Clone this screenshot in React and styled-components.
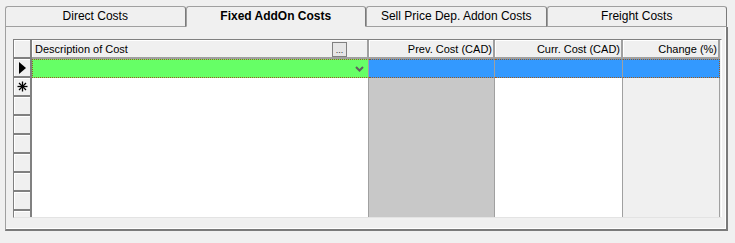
import React from 'react';
import styled, { createGlobalStyle } from 'styled-components';

const GlobalStyle = createGlobalStyle`
  body {
    margin: 0;
    background: #f0f0f0;
    font-family: "Liberation Sans", Arial, sans-serif;
    color: #000;
  }
`;

const tabs = ['Direct Costs', 'Fixed AddOn Costs', 'Sell Price Dep. Addon Costs', 'Freight Costs'];
const activeTab = 1;

const columns = [
  { key: 'desc', label: 'Description of Cost', align: 'left', bg: '#ffffff', current: '#66ff66' },
  { key: 'prev', label: 'Prev. Cost (CAD)', align: 'right', bg: '#c8c8c8', current: '#3399ff' },
  { key: 'curr', label: 'Curr. Cost (CAD)', align: 'right', bg: '#ffffff', current: '#3399ff' },
  { key: 'change', label: 'Change (%)', align: 'right', bg: '#f0f0f0', current: '#3399ff' },
];

const rowCount = 9;

const Arrow = () => (
  <svg width="7" height="12" viewBox="0 0 7 12">
    <polygon points="0,0 7,6 0,12" fill="#000" />
  </svg>
);

const Star = () => (
  <svg width="11" height="11" viewBox="0 0 11 11" stroke="#000" strokeWidth="1.3">
    <line x1="5.5" y1="0.5" x2="5.5" y2="10.5" />
    <line x1="0.5" y1="5.5" x2="10.5" y2="5.5" />
    <line x1="2" y1="2" x2="9" y2="9" />
    <line x1="9" y1="2" x2="2" y2="9" />
  </svg>
);

const Chevron = () => (
  <svg width="9" height="6" viewBox="0 0 9 6">
    <polyline points="1,1 4.5,4.5 8,1" fill="none" stroke="#606060" strokeWidth="2" />
  </svg>
);

const App = () => {
  return (
    <>
      <GlobalStyle />
      <Frame>
        <TabBar>
          {tabs.map((t, i) => (
            <Tab key={t} $active={i === activeTab}>
              {t}
            </Tab>
          ))}
        </TabBar>
        <Panel>
          <Table>
            <RowHead />
            {columns.map((c, i) => (
              <HeadCell key={c.key} $align={c.align}>
                <span>{c.label}</span>
                {i === 0 && <DotsButton>...</DotsButton>}
              </HeadCell>
            ))}
            {Array.from({ length: rowCount }).map((_, r) => (
              <React.Fragment key={r}>
                <RowHead>
                  {r === 0 && <Arrow />}
                  {r === 1 && <Star />}
                </RowHead>
                {columns.map((c, i) => (
                  <Cell
                    key={c.key}
                    $bg={r === 0 ? c.current : c.bg}
                    $current={r === 0}
                    $first={i === 0}
                    $last={i === columns.length - 1}
                  >
                    {r === 0 && i === 0 && <Chevron />}
                  </Cell>
                ))}
              </React.Fragment>
            ))}
          </Table>
        </Panel>
      </Frame>
    </>
  );
};

export default App;

const Frame = styled.div`
  padding: 6px 0 0 5px;
  width: 723px;
`;

const TabBar = styled.div`
  display: flex;
  width: 722px;
  height: 21px;
  align-items: flex-end;
`;

const Tab = styled.div`
  flex: 1;
  box-sizing: border-box;
  height: 21px;
  display: flex;
  align-items: center;
  justify-content: center;
  padding-bottom: 1px;
  font-size: 12px;
  font-weight: ${({ $active }) => ($active ? 'bold' : 'normal')};
  background: #f0f0f0;
  border-top: 1px solid #a0a0a0;
  border-left: 1px solid #a0a0a0;
  border-right: 1px solid #7a7a7a;
  border-bottom: ${({ $active }) => ($active ? '1px solid #f0f0f0' : '1px solid #a0a0a0')};
  border-top-left-radius: 3px;
  border-top-right-radius: 3px;
  white-space: nowrap;
`;

const Panel = styled.div`
  box-sizing: border-box;
  width: 723px;
  height: 204px;
  padding: 12px 0 10px 7px;
  border-left: 1px solid #a0a0a0;
  border-right: 2px solid #7a7a7a;
  border-bottom: 2px solid #7a7a7a;
  box-shadow: inset -1px -1px 0 #ffffff;
`;

const Table = styled.div`
  box-sizing: border-box;
  width: 709px;
  height: 179px;
  overflow: hidden;
  display: grid;
  grid-template-columns: 18px 337px 126px 128px 97px;
  grid-auto-rows: 19px;
  align-content: start;
  border-top: 1px solid #808080;
  border-left: 1px solid #808080;
  border-right: 1px solid #ffffff;
  border-bottom: 1px solid #e3e3e3;
  background: #f0f0f0;
`;

const RowHead = styled.div`
  box-sizing: border-box;
  display: flex;
  align-items: center;
  justify-content: center;
  background: #f0f0f0;
  border-right: 2px solid #808080;
  border-bottom: 2px solid #808080;
  box-shadow: inset 1px 1px 0 #ffffff;
`;

const HeadCell = styled.div`
  box-sizing: border-box;
  position: relative;
  display: flex;
  align-items: center;
  justify-content: ${({ $align }) => ($align === 'right' ? 'flex-end' : 'flex-start')};
  padding: 1px 1px 0 3px;
  font-size: 11px;
  background: #f0f0f0;
  border-right: 2px solid #a0a0a0;
  border-bottom: 2px solid #a0a0a0;
  box-shadow: inset 1px 1px 0 #ffffff;
  white-space: nowrap;
  overflow: hidden;
`;

const DotsButton = styled.div`
  position: absolute;
  right: 20px;
  top: 2px;
  box-sizing: border-box;
  width: 15px;
  height: 15px;
  border: 1px solid #808080;
  background: #e6e6e6;
  font-size: 9px;
  line-height: 15px;
  text-align: center;
  color: #333;
`;

const Cell = styled.div`
  box-sizing: border-box;
  display: flex;
  align-items: center;
  justify-content: flex-end;
  padding-right: 4px;
  background: ${({ $bg }) => $bg};
  border-right: 1px solid #a0a0a0;
  ${({ $current, $first, $last }) =>
    $current &&
    `
    border-top: 1px dotted #9a5a20;
    border-bottom: 1px dotted #9a5a20;
    ${$first ? 'border-left: 1px dotted #9a5a20;' : ''}
    ${$last ? 'border-right: 1px dotted #9a5a20;' : ''}
  `}
`;
